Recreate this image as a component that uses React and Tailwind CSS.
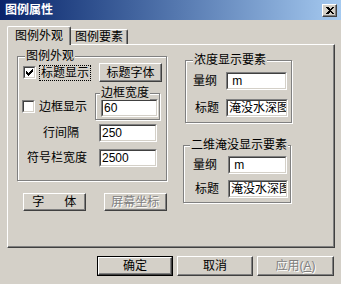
import React from 'react';

const face =
  'flex items-center justify-center bg-[#d4d0c8] border border-t-white border-l-white border-r-[#404040] border-b-[#404040] shadow-[inset_-1px_-1px_0_#808080]';

function Btn({ children, className = '', disabled }) {
  return (
    <div className={`${face} ${className} ${disabled ? 'text-[#808080] [text-shadow:1px_1px_0_#fff]' : ''}`}>
      {children}
    </div>
  );
}

function Field({ value, className = '' }) {
  return (
    <div className={`bg-white border border-t-[#808080] border-l-[#808080] border-r-white border-b-white ${className}`}>
      <div className="h-full border border-t-[#404040] border-l-[#404040] border-r-[#d4d0c8] border-b-[#d4d0c8] flex items-center pl-[1px] overflow-hidden whitespace-pre leading-none">
        {value}
      </div>
    </div>
  );
}

function Check({ checked }) {
  return (
    <div className="w-[13px] h-[13px] shrink-0 bg-white border border-t-[#808080] border-l-[#808080] border-r-white border-b-white">
      <div className="w-full h-full border border-t-[#404040] border-l-[#404040] border-r-[#d4d0c8] border-b-[#d4d0c8] flex items-center justify-center">
        {checked && (
          <svg width="7" height="7" viewBox="0 0 7 7" shapeRendering="crispEdges">
            <rect x="6" y="0" width="1" height="1" />
            <rect x="5" y="1" width="2" height="1" />
            <rect x="0" y="2" width="1" height="1" />
            <rect x="4" y="2" width="3" height="1" />
            <rect x="0" y="3" width="2" height="1" />
            <rect x="3" y="3" width="3" height="1" />
            <rect x="0" y="4" width="5" height="1" />
            <rect x="1" y="5" width="3" height="1" />
            <rect x="2" y="6" width="1" height="1" />
          </svg>
        )}
      </div>
    </div>
  );
}

function Group({ title, className = '', legend = 'left-[7px]', children }) {
  return (
    <div className={`relative border border-[#808080] shadow-[1px_1px_0_#fff,inset_1px_1px_0_#fff] ${className}`}>
      <span className={`absolute -top-[8px] ${legend} bg-[#d4d0c8] px-[1px] leading-[14px] whitespace-nowrap`}>{title}</span>
      {children}
    </div>
  );
}

export default function App() {
  return (
    <div className="w-[341px] h-[284px] bg-[#d4d0c8] flex flex-col text-[12px] leading-[14px] text-black font-['Liberation_Sans','Noto_Sans_CJK_SC',sans-serif] overflow-hidden">
      {/* title bar */}
      <div className="h-[20px] flex items-center justify-between bg-linear-to-r from-[#0a246a] to-[#a6caf0] pl-[5px] pr-[4px]">
        <span className="text-white font-bold">图例属性</span>
        <div className={`${face} w-[15px] h-[13px]`}>
          <svg width="8" height="7" viewBox="0 0 8 7" shapeRendering="crispEdges">
            <path d="M0 0h2l2 2 2-2h2L5 3.5 8 7H6L4 5 2 7H0l3-3.5z" fill="black" />
          </svg>
        </div>
      </div>

      <div className="px-[7px] pt-[6px]">
        {/* tabs */}
        <div className="flex items-end h-[18px] relative z-10">
          <div className="w-[64px] h-[19px] -mb-[1px] bg-[#d4d0c8] border border-b-0 border-t-white border-l-white border-r-[#404040] rounded-t-[2px] shadow-[inset_-1px_0_0_#808080] flex items-center justify-center">
            图例外观
          </div>
          <div className="w-[57px] h-[15px] bg-[#d4d0c8] border border-b-0 border-l-0 border-t-white border-r-[#404040] rounded-tr-[2px] shadow-[inset_-1px_0_0_#808080] flex items-center justify-center">
            图例要素
          </div>
        </div>

        {/* panel */}
        <div className="w-[328px] h-[204px] border border-t-white border-l-white border-r-[#404040] border-b-[#404040] shadow-[inset_-1px_-1px_0_#808080]">
          <div className="flex pl-[9px] pt-[11px]">
            <div className="flex flex-col w-[150px]">
              <Group title="图例外观" className="h-[125px]">
                <div className="flex items-center h-[19px] mt-[6px]">
                  <div className="ml-[5px]"><Check checked /></div>
                  <div className="ml-[3px] h-[16px] px-[1px] border border-dotted border-black flex items-center">标题显示</div>
                  <Btn className="ml-[8px] w-[63px] h-[19px]">标题字体</Btn>
                </div>
                <div className="flex items-center h-[27px] mt-[11px]">
                  <div className="ml-[4px]"><Check /></div>
                  <span className="ml-[4px]">边框显示</span>
                  <Group title="边框宽度" legend="left-[4px]" className="ml-[8px] w-[65px] h-[27px]">
                    <Field value="60" className="ml-[5px] mt-[5px] w-[57px] h-[18px]" />
                  </Group>
                </div>
                <div className="flex items-center h-[18px] mt-[4px]">
                  <span className="ml-[25px] w-[36px]">行间隔</span>
                  <Field value="250" className="ml-[20px] w-[58px] h-[18px]" />
                </div>
                <div className="flex items-center h-[18px] mt-[7px]">
                  <span className="ml-[9px] w-[60px]">符号栏宽度</span>
                  <Field value="2500" className="ml-[12px] w-[58px] h-[18px]" />
                </div>
              </Group>
              <div className="flex mt-[12px] ml-[6px] gap-[18px]">
                <Btn className="w-[64px] h-[18px] gap-[20px]">
                  <span>字</span>
                  <span>体</span>
                </Btn>
                <Btn disabled className="w-[65px] h-[18px]">屏幕坐标</Btn>
              </div>
            </div>

            <div className="flex flex-col ml-[18px] mt-[4px]">
              <Group title="浓度显示要素" className="w-[107px] h-[63px]">
                <div className="flex items-center h-[18px] mt-[11px]">
                  <span className="ml-[7px] w-[24px]">量纲</span>
                  <Field value=" m" className="ml-[9px] w-[61px] h-[18px]" />
                </div>
                <div className="flex items-center h-[18px] mt-[9px]">
                  <span className="ml-[9px] w-[24px]">标题</span>
                  <Field value="淹没水深图" className="ml-[7px] w-[62px] h-[18px]" />
                </div>
              </Group>
              <Group title="二维淹没显示要素" legend="left-[6px]" className="w-[108px] h-[58px] mt-[22px] -ml-[2px]">
                <div className="flex items-center h-[18px] mt-[10px]">
                  <span className="ml-[9px] w-[24px]">量纲</span>
                  <Field value=" m" className="ml-[11px] w-[59px] h-[18px]" />
                </div>
                <div className="flex items-center h-[18px] mt-[6px]">
                  <span className="ml-[11px] w-[24px]">标题</span>
                  <Field value="淹没水深图" className="ml-[9px] w-[60px] h-[18px]" />
                </div>
              </Group>
            </div>
          </div>
        </div>
      </div>

      {/* dialog buttons */}
      <div className="flex justify-end gap-[4px] pr-[7px] mt-[8px]">
        <div className="w-[76px] h-[20px] border border-black">
          <Btn className="w-full h-full">确定</Btn>
        </div>
        <Btn className="w-[76px] h-[20px]">取消</Btn>
        <Btn disabled className="w-[77px] h-[20px]">
          应用(<span className="underline">A</span>)
        </Btn>
      </div>
    </div>
  );
}
